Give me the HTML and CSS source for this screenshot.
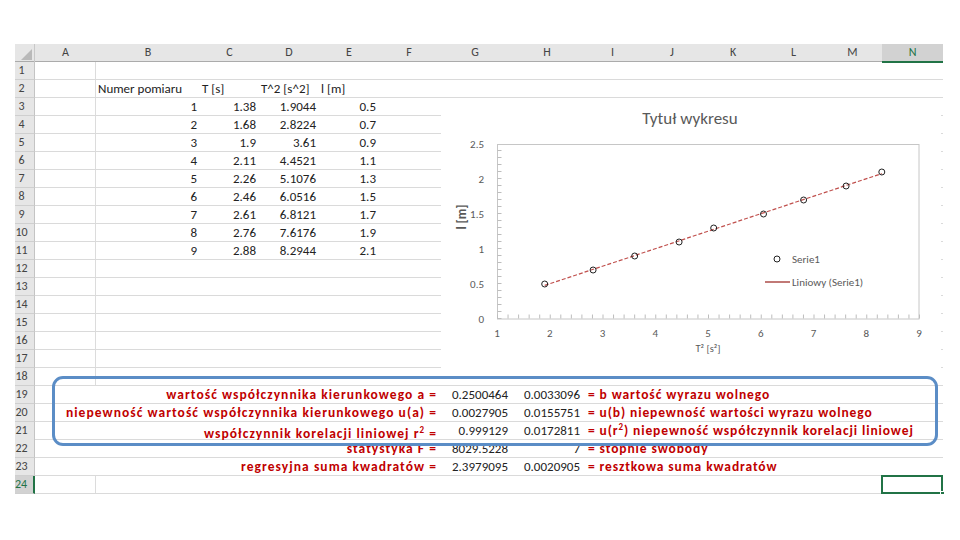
FILE: index.html
```html
<!DOCTYPE html>
<html lang="pl">
<head>
<meta charset="utf-8">
<title>Arkusz</title>
<link rel="stylesheet" href="styles.css">
</head>
<body>
<div class="page">
  <div class="sheet">
    <div class="hdr">
      <div class="corner"><span class="tri"></span></div>
      <div class="ch">A</div><div class="ch">B</div><div class="ch">C</div><div class="ch">D</div><div class="ch">E</div><div class="ch">F</div><div class="ch">G</div><div class="ch">H</div><div class="ch">I</div><div class="ch">J</div><div class="ch">K</div><div class="ch">L</div><div class="ch">M</div><div class="ch ch-sel">N</div>
    </div>

    <div class="r"><div class="rh">1</div><div class="a"></div></div>
    <div class="r"><div class="rh">2</div><div class="a"></div><div class="t">Numer pomiaru</div><div class="t">T [s]</div><div class="t">T^2 [s^2]</div><div class="t">l [m]</div></div>
    <div class="r"><div class="rh">3</div><div class="a"></div><div class="n">1</div><div class="n">1.38</div><div class="n">1.9044</div><div class="n">0.5</div></div>
    <div class="r"><div class="rh">4</div><div class="a"></div><div class="n">2</div><div class="n">1.68</div><div class="n">2.8224</div><div class="n">0.7</div></div>
    <div class="r"><div class="rh">5</div><div class="a"></div><div class="n">3</div><div class="n">1.9</div><div class="n">3.61</div><div class="n">0.9</div></div>
    <div class="r"><div class="rh">6</div><div class="a"></div><div class="n">4</div><div class="n">2.11</div><div class="n">4.4521</div><div class="n">1.1</div></div>
    <div class="r"><div class="rh">7</div><div class="a"></div><div class="n">5</div><div class="n">2.26</div><div class="n">5.1076</div><div class="n">1.3</div></div>
    <div class="r"><div class="rh">8</div><div class="a"></div><div class="n">6</div><div class="n">2.46</div><div class="n">6.0516</div><div class="n">1.5</div></div>
    <div class="r"><div class="rh">9</div><div class="a"></div><div class="n">7</div><div class="n">2.61</div><div class="n">6.8121</div><div class="n">1.7</div></div>
    <div class="r"><div class="rh">10</div><div class="a"></div><div class="n">8</div><div class="n">2.76</div><div class="n">7.6176</div><div class="n">1.9</div></div>
    <div class="r"><div class="rh">11</div><div class="a"></div><div class="n">9</div><div class="n">2.88</div><div class="n">8.2944</div><div class="n">2.1</div></div>
    <div class="r"><div class="rh">12</div><div class="a"></div></div>
    <div class="r"><div class="rh">13</div><div class="a"></div></div>
    <div class="r"><div class="rh">14</div><div class="a"></div></div>
    <div class="r"><div class="rh">15</div><div class="a"></div></div>
    <div class="r"><div class="rh">16</div><div class="a"></div></div>
    <div class="r"><div class="rh">17</div><div class="a"></div></div>
    <div class="r"><div class="rh">18</div><div class="a"></div></div>
    <div class="r"><div class="rh">19</div><div class="lab">wartość współczynnika kierunkowego a =</div><div class="n">0.2500464</div><div class="n">0.0033096</div><div class="rest">= b wartość wyrazu wolnego</div></div>
    <div class="r"><div class="rh">20</div><div class="lab">niepewność wartość współczynnika kierunkowego u(a) =</div><div class="n">0.0027905</div><div class="n">0.0155751</div><div class="rest">= u(b) niepewność wartości wyrazu wolnego</div></div>
    <div class="r"><div class="rh">21</div><div class="lab low">współczynnik korelacji liniowej r<sup>2</sup> =</div><div class="n">0.999129</div><div class="n">0.0172811</div><div class="rest">= u(r<sup>2</sup>) niepewność współczynnik korelacji liniowej</div></div>
    <div class="r"><div class="rh">22</div><div class="lab">statystyka F =</div><div class="n">8029.5228</div><div class="n">7</div><div class="rest">= stopnie swobody</div></div>
    <div class="r"><div class="rh">23</div><div class="lab">regresyjna suma kwadratów =</div><div class="n">2.3979095</div><div class="n">0.0020905</div><div class="rest">= resztkowa suma kwadratów</div></div>
    <div class="r"><div class="rh rh-sel">24</div><div class="a"></div><div class="selcell"><span class="handle"></span></div></div>

    <div class="chart">
      <svg width="500" height="269" viewBox="0 0 500 269">
        <text class="ttl" x="249" y="25" text-anchor="middle">Tytuł wykresu</text>
        <rect x="56.5" y="45.5" width="421.5" height="174.5" fill="none" stroke="#c6c6c6" stroke-width="1"/>
        <line x1="56" y1="217.5" x2="479" y2="217.5" stroke="#bdbdbd" stroke-width="4" stroke-dasharray="1 9.55"/>
        <line x1="58.5" y1="220" x2="58.5" y2="45" stroke="#bdbdbd" stroke-width="4" stroke-dasharray="1 6"/>
        <g class="lbl" text-anchor="end">
          <text x="43" y="49">2.5</text>
          <text x="43" y="84">2</text>
          <text x="43" y="119">1.5</text>
          <text x="43" y="154">1</text>
          <text x="43" y="189">0.5</text>
          <text x="43" y="224">0</text>
        </g>
        <g class="lbl" text-anchor="middle">
          <text x="56" y="238">1</text>
          <text x="108.75" y="238">2</text>
          <text x="161.5" y="238">3</text>
          <text x="214.25" y="238">4</text>
          <text x="267" y="238">5</text>
          <text x="319.75" y="238">6</text>
          <text x="372.5" y="238">7</text>
          <text x="425.25" y="238">8</text>
          <text x="478" y="238">9</text>
        </g>
        <text class="xt" x="267" y="253" text-anchor="middle">T² [s²]</text>
        <text class="yt" x="0" y="0" text-anchor="middle" transform="translate(25 118) rotate(-90)">l [m]</text>
        <line x1="103.7" y1="186.4" x2="440.8" y2="74.6" stroke="#c0504d" stroke-width="1.2" stroke-dasharray="4 2"/>
        <g fill="none" stroke="#222" stroke-width="1">
          <circle cx="103.7" cy="185" r="3"/>
          <circle cx="152.1" cy="171" r="3"/>
          <circle cx="193.7" cy="157" r="3"/>
          <circle cx="238.1" cy="143" r="3"/>
          <circle cx="272.7" cy="129" r="3"/>
          <circle cx="322.5" cy="115" r="3"/>
          <circle cx="362.6" cy="101" r="3"/>
          <circle cx="405.1" cy="87" r="3"/>
          <circle cx="440.8" cy="73" r="3"/>
          <circle cx="336" cy="160" r="3"/>
        </g>
        <line x1="324" y1="183" x2="349" y2="183" stroke="#a0302c" stroke-width="1.3"/>
        <text class="lg" x="351" y="164">Serie1</text>
        <text class="lg" x="351" y="187">Liniowy (Serie1)</text>
      </svg>
    </div>

    <div class="frame"></div>
  </div>
</div>
</body>
</html>
```

FILE: styles.css
```css
* { box-sizing: border-box; }
html, body { margin: 0; padding: 0; background: #fff; }
body {
  font-family: "Carlito", "Lato", "Liberation Sans", sans-serif;
  color: #222;
}
.page { padding: 44px 0 0 15px; }
.sheet {
  position: relative;
  width: 928px;
  --cols: 20px 61px 104px 59px 60px 60px 60px 72px 72px 59px 60px 62px 59px 59px 61px;
}
.hdr {
  display: grid;
  grid-template-columns: var(--cols);
  height: 18px;
  background: #e6e6e6;
  border-bottom: 1px solid #ababab;
}
.corner { position: relative; border-right: 1px solid #c8c8c8; }
.tri {
  position: absolute;
  right: 2px; bottom: 2px;
  width: 0; height: 0;
  border-left: 11px solid transparent;
  border-bottom: 11px solid #b9b9b9;
}
.ch {
  font-size: 12px;
  line-height: 17px;
  text-align: center;
  color: #444;
}
.ch-sel {
  background: #d2d2d2;
  color: #217346;
  border-bottom: 2px solid #217346;
  margin-bottom: -1px;
}
.r {
  display: grid;
  grid-template-columns: var(--cols);
  height: 18px;
  border-bottom: 1px solid #dadada;
  font-size: 13px;
  line-height: 17px;
}
.rh {
  background: #e6e6e6;
  color: #444;
  font-size: 12px;
  text-align: center;
  padding-right: 6px;
  border-right: 1px solid #c4c4c4;
  border-bottom: 1px solid #cfcfcf;
  margin-bottom: -1px;
}
.rh-sel {
  background: #d2d2d2;
  color: #217346;
  border-right: 2px solid #217346;
}
.a { border-right: 1px solid #dcdcdc; }
.t { padding-left: 2px; white-space: nowrap; }
.n { text-align: right; padding-right: 3px; white-space: nowrap; }
.lab {
  grid-column: 2 / 8;
  text-align: right;
  padding-right: 2px;
  white-space: nowrap;
  color: #c00000;
  font-weight: 700;
  font-size: 13.5px;
  letter-spacing: 1.05px;
}
.low { padding-top: 3px; }
.rest {
  grid-column: 10 / 16;
  padding-left: 5px;
  white-space: nowrap;
  color: #c00000;
  font-weight: 700;
  font-size: 13.5px;
  letter-spacing: 0.9px;
}
sup { font-size: 9px; line-height: 0; vertical-align: 5px; }
.selcell {
  grid-column: 15;
  position: relative;
  border: 2px solid #217346;
  margin: -1px 0 -1px -1px;
}
.handle {
  position: absolute;
  right: -4px; bottom: -4px;
  width: 5px; height: 5px;
  background: #217346;
  border: 1px solid #fff;
}
.chart {
  position: absolute;
  left: 426px;
  top: 55px;
  width: 500px;
  height: 269px;
  background: #fff;
}
.chart svg { display: block; font-family: "Carlito", "Lato", "Liberation Sans", sans-serif; }
.ttl { font-size: 17px; fill: #595959; }
.lbl { font-size: 11px; fill: #595959; }
.lg { font-size: 11px; fill: #595959; }
.xt { font-size: 10.5px; fill: #595959; }
.yt { font-size: 13px; fill: #595959; font-weight: 700; }
.frame {
  position: absolute;
  left: 37px;
  top: 332px;
  width: 886px;
  height: 70px;
  border: 3px solid #5b8dc6;
  border-radius: 11px;
  pointer-events: none;
}
```
